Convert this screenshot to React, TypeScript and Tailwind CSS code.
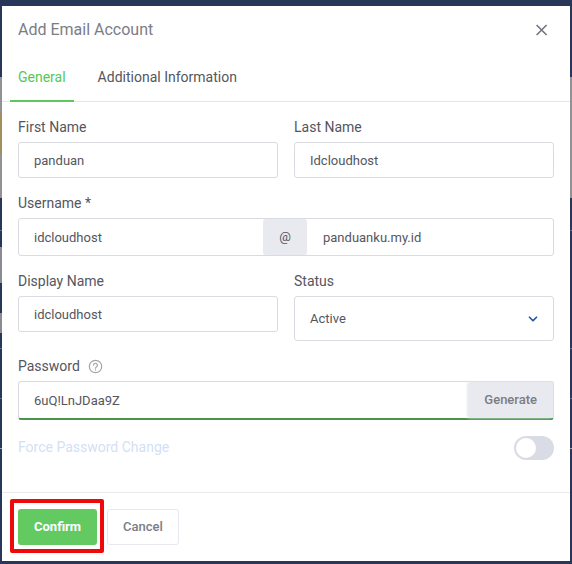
import { useState, type FC, type ReactNode } from "react";
import { ChevronDown } from "lucide-react";

interface FieldProps {
  id: string;
  label: string;
  hint?: ReactNode;
  children: ReactNode;
}

const Field: FC<FieldProps> = ({ id, label, hint, children }) => (
  <div className="flex flex-col gap-[5px] min-w-0">
    <div className="flex items-center gap-2">
      <label htmlFor={id} className="text-sm leading-5">
        {label}
      </label>
      {hint}
    </div>
    {children}
  </div>
);

const inputClass =
  "w-full h-9 px-[15px] rounded-[3px] border border-[#dadbe0] bg-white text-[13px] outline-none";

const HelpIcon: FC = () => (
  <button type="button" aria-label="Password help" className="text-[#a3a5a9]">
    <svg
      className="size-[15px]"
      viewBox="0 0 15 15"
      fill="none"
      stroke="currentColor"
      strokeWidth="1.2"
      strokeLinecap="round"
    >
      <circle cx="7.5" cy="7.5" r="6.2" />
      <path d="M5.6 6.2a1.9 1.9 0 1 1 3 1.5c-.7.5-1.1.8-1.1 1.5" />
      <path d="M7.5 11v.1" strokeWidth="1.4" />
    </svg>
  </button>
);

// dimmed page that shows around the dialog
const Backdrop: FC = () => (
  <div className="absolute inset-0 flex flex-col bg-[#28365a]" aria-hidden="true">
    <div className="h-[77px]" />
    <div className="h-[121px] pt-9 bg-[#929295]">
      <div className="w-1 h-[41px] bg-[#a08f5c]" />
    </div>
    <div className="h-8" />
    <div className="h-px bg-[#66708c]" />
    <div className="h-4" />
    <div className="w-1 h-9 bg-[#8b8c92]" />
    <div className="h-[30px]" />
    <div className="w-1 h-5 bg-[#8b8c92]" />
    <div className="h-[15px]" />
    <div className="h-px bg-[#66708c]" />
    <div className="h-[49px]" />
    <div className="h-px bg-[#66708c]" />
    <div className="h-[49px]" />
    <div className="h-px bg-[#9a9fb0]" />
  </div>
);

const tabs = ["General", "Additional Information"];

const App: FC = () => {
  const [tab, setTab] = useState("General");

  return (
    <div className="relative px-0.5 pt-1.5 pb-[3px] font-[Roboto,sans-serif] text-[#54565e]">
      <Backdrop />
      <form
        role="dialog"
        aria-labelledby="dialog-title"
        className="relative bg-white"
        onSubmit={(e) => e.preventDefault()}
      >
        <header className="flex justify-between items-center h-[47px] px-4">
          <h1 id="dialog-title" className="text-base text-[#7b7d85]">
            Add Email Account
          </h1>
          <button type="button" aria-label="Close" className="p-1.5 text-[#73757e]">
            <svg
              className="size-3"
              viewBox="0 0 12 12"
              fill="none"
              stroke="currentColor"
              strokeWidth="1.6"
            >
              <path d="M.6 1l10 10M10.6 1L.6 11" />
            </svg>
          </button>
        </header>

        <div role="tablist" className="flex gap-4 px-2 border-b border-[#e4e5e9]">
          {tabs.map((name) => (
            <button
              key={name}
              type="button"
              role="tab"
              aria-selected={tab === name}
              onClick={() => setTab(name)}
              className={`h-[49px] -mb-px px-2 border-b-2 text-sm ${
                tab === name
                  ? "border-[#5fc660] text-[#54c857]"
                  : "border-transparent"
              }`}
            >
              {name}
            </button>
          ))}
        </div>

        <div className="flex flex-col gap-[15px] px-4 pt-[15px] pb-8">
          <div className="grid grid-cols-2 gap-4">
            <Field id="first-name" label="First Name">
              <input id="first-name" defaultValue="panduan" className={inputClass} />
            </Field>
            <Field id="last-name" label="Last Name">
              <input id="last-name" defaultValue="Idcloudhost" className={inputClass} />
            </Field>
          </div>

          <Field id="username" label="Username *">
            <div className="flex h-[38px] rounded-[3px] border border-[#dadbe0] text-[13px]">
              <input
                id="username"
                defaultValue="idcloudhost"
                className="flex-1 min-w-0 px-[15px] pt-0.5 outline-none"
              />
              <span className="flex justify-center items-center w-11 rounded-[3px] bg-[#e9eaf0]">
                @
              </span>
              <input
                aria-label="Domain"
                defaultValue="panduanku.my.id"
                className="flex-1 min-w-0 px-4 pt-0.5 outline-none"
              />
            </div>
          </Field>

          <div className="grid grid-cols-2 items-start gap-4">
            <Field id="display-name" label="Display Name">
              <input id="display-name" defaultValue="idcloudhost" className={inputClass} />
            </Field>
            <Field id="status" label="Status">
              <div className="relative">
                <select
                  id="status"
                  className="block w-full h-[45px] px-[15px] rounded-[3px] border border-[#dadbe0] bg-white text-[13px] appearance-none outline-none"
                >
                  <option>Active</option>
                  <option>Suspended</option>
                </select>
                <ChevronDown
                  className="absolute top-4 right-3.5 size-3.5 text-[#2158a8] pointer-events-none"
                  strokeWidth={3}
                />
              </div>
            </Field>
          </div>

          <Field id="password" label="Password" hint={<HelpIcon />}>
            <div className="flex h-[39px] rounded-[3px] border border-b-2 border-[#dadbe0] border-b-[#4a934c] text-[13px]">
              <input
                id="password"
                defaultValue="6uQ!LnJDaa9Z"
                className="flex-1 min-w-0 px-[15px] pt-0.5 outline-none"
              />
              <button
                type="button"
                className="px-4 rounded-[3px] bg-[#e9eaf0] font-medium text-[#7b7d85] shadow-[-1px_0_3px_#e9eaf0]"
              >
                Generate
              </button>
            </div>
          </Field>

          <div className="flex justify-between items-center pt-px">
            <label htmlFor="force-change" className="pb-0.5 text-sm text-[#d3dff6]">
              Force Password Change
            </label>
            <input
              id="force-change"
              type="checkbox"
              role="switch"
              className="flex items-center w-10 h-6 px-0.5 rounded-full bg-[#dadce5] appearance-none before:size-5 before:rounded-full before:bg-white checked:justify-end checked:bg-[#5fc660]"
            />
          </div>
        </div>

        <footer className="flex gap-2.5 p-4 border-t border-[#e9eaed] text-[13px]">
          <div className="relative">
            <button
              type="submit"
              className="h-9 px-4 rounded-[3px] bg-[#62ca61] font-bold text-white"
            >
              Confirm
            </button>
            <span className="absolute -top-2.5 -right-[7px] -bottom-2 -left-2 border-4 border-[#ee0a0a] rounded-xs pointer-events-none" />
          </div>
          <button
            type="button"
            className="h-9 px-[15px] rounded-[3px] border border-[#e7e8ed] font-medium text-[#7b7d85]"
          >
            Cancel
          </button>
        </footer>
      </form>
    </div>
  );
};

export default App;
